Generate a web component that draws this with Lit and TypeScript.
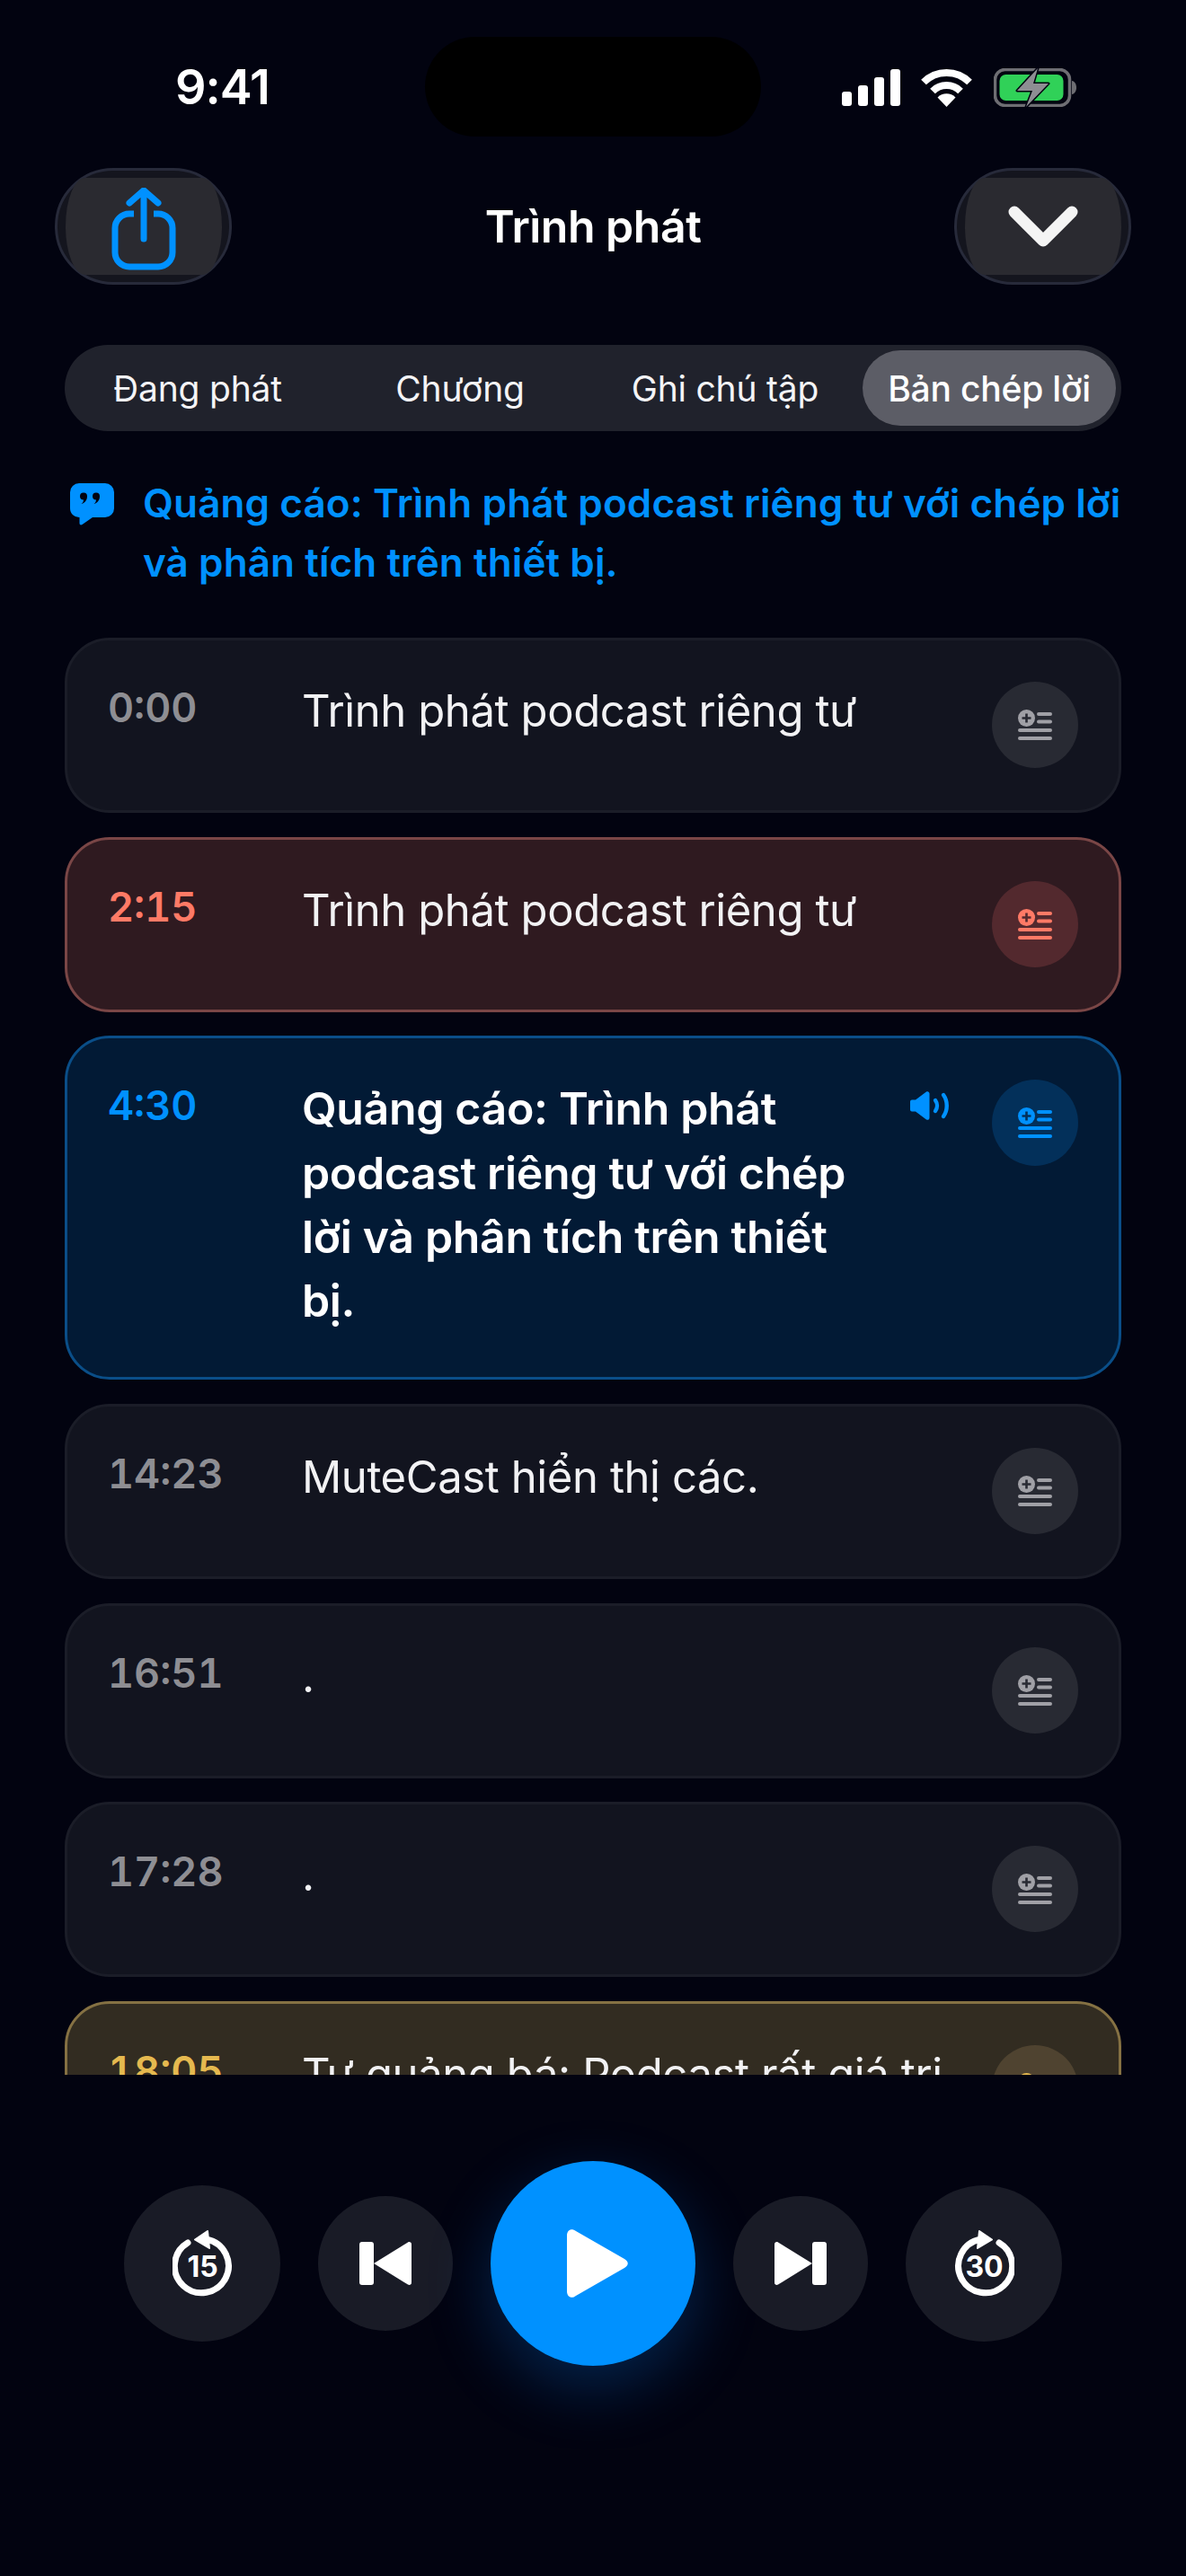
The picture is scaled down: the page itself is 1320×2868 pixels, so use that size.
import { LitElement, html, css, svg } from "lit";
import { customElement } from "lit/decorators.js";

type Row = { time: string; text: string; kind: "plain" | "red" | "blue" | "gold" };

const ROWS: Row[] = [
  { time: "0:00", text: "Trình phát podcast riêng tư", kind: "plain" },
  { time: "2:15", text: "Trình phát podcast riêng tư", kind: "red" },
  { time: "4:30", text: "Quảng cáo: Trình phát podcast riêng tư với chép lời và phân tích trên thiết bị.", kind: "blue" },
  { time: "14:23", text: "MuteCast hiển thị các.", kind: "plain" },
  { time: "16:51", text: ".", kind: "plain" },
  { time: "17:28", text: ".", kind: "plain" },
  { time: "18:05", text: "Tự quảng bá: Podcast rất giá trị", kind: "gold" },
];

const TABS = ["Đang phát", "Chương", "Ghi chú tập", "Bản chép lời"];

const addIcon = svg`<svg class="add" width="38" height="34" viewBox="0 0 38 34">
  <circle cx="9.5" cy="9.5" r="9.5" fill="currentColor"/>
  <path class="plus" d="M9.5 4.5v10M4.5 9.5h10" fill="none" stroke-width="2.6"/>
  <path d="M23 5h13M23 13.5h13M2 23h34M2 32h34" stroke="currentColor" stroke-width="4" stroke-linecap="round" fill="none"/>
</svg>`;

@customElement("app-root")
export class AppRoot extends LitElement {
  static styles = css`
    :host {
      display: block;
      width: 1320px;
      height: 2868px;
      overflow: hidden;
      background: #020310;
      color: #fff;
      font-family: Inter, "Noto Sans", "Liberation Sans", sans-serif;
    }
    button {
      border: 0;
      padding: 0;
      margin: 0;
      font: inherit;
      color: inherit;
      background: none;
    }
    .status {
      position: relative;
      box-sizing: border-box;
      height: 187px;
      padding: 7px 122px 0 195px;
      display: flex;
      align-items: center;
      justify-content: space-between;
    }
    .clock {
      font-size: 54px;
      font-weight: 600;
      letter-spacing: -1px;
      line-height: 60px;
    }
    .island {
      position: absolute;
      left: 473px;
      top: 41px;
      width: 374px;
      height: 111px;
      border-radius: 56px;
      background: #000;
    }
    .sys {
      display: flex;
      align-items: center;
      gap: 23px;
    }
    .sys svg {
      display: block;
    }
    .batt {
      margin-left: 1px;
    }
    .bar {
      height: 130px;
      padding: 0 61px;
      display: flex;
      align-items: center;
      justify-content: space-between;
    }
    .title {
      font-size: 50px;
      font-weight: 600;
      letter-spacing: -0.5px;
    }
    .round {
      box-sizing: border-box;
      width: 197px;
      height: 130px;
      border-radius: 65px;
      border: 3px solid #272a3a;
      background: #14151e;
      display: flex;
      align-items: center;
      justify-content: center;
    }
    .round span {
      width: 174px;
      height: 108px;
      border-radius: 22px / 54px;
      background: #2a2a30;
      display: flex;
      align-items: center;
      justify-content: center;
    }
    .share {
      margin-top: 6px;
    }
    .tabs {
      margin: 67px 72px 0;
      box-sizing: border-box;
      height: 96px;
      padding: 6px 6px 6px 2px;
      border-radius: 48px;
      background: #20222c;
      display: grid;
      grid-template-columns: 292px 292px 298px 1fr;
    }
    .tab {
      border-radius: 42px;
      font-size: 39px;
      font-weight: 400;
      letter-spacing: -0.2px;
      color: #f4f4f6;
    }
    .tab.on {
      margin-left: 4px;
      background: #5c5d66;
      font-weight: 500;
      color: #fff;
    }
    .quote {
      margin: 47px 72px 0 78px;
      display: flex;
      align-items: flex-start;
      gap: 32px;
      color: #0091ff;
      font-size: 44px;
      font-weight: 600;
      line-height: 66px;
      letter-spacing: 0.1px;
    }
    .quote svg {
      flex: none;
      margin-top: 11px;
    }
    .list {
      margin: 51px 72px 0;
      height: 1600px;
      overflow: hidden;
      display: flex;
      flex-direction: column;
      gap: 26.7px;
    }
    .card {
      flex: none;
      box-sizing: border-box;
      padding: 46px 45px 47px;
      border: 3px solid #1b1d28;
      border-radius: 50px;
      background: #12141f;
      display: flex;
      align-items: flex-start;
      --plus: #282a33;
    }
    .card .time {
      flex: none;
      width: 216px;
      font-size: 45px;
      font-weight: 600;
      line-height: 58px;
      color: #8e8e93;
      font-variant-numeric: tabular-nums;
    }
    .card .text {
      flex: 1;
      min-width: 0;
      margin-top: -3px;
      font-size: 49px;
      line-height: 71.25px;
      font-weight: 400;
      color: #f2f2f4;
      letter-spacing: -0.4px;
    }
    .card .speaker {
      flex: none;
      margin: 13px 48px 0 24px;
      color: #0091ff;
    }
    .card .act {
      flex: none;
      margin-left: 24px;
      width: 96px;
      height: 96px;
      border-radius: 50%;
      background: #282a33;
      color: #a0a0a6;
      display: flex;
      align-items: center;
      justify-content: center;
    }
    .speaker + .act {
      margin-left: 0;
    }
    .plus {
      stroke: var(--plus);
    }
    .red {
      background: #2f1a20;
      border-color: #7a4646;
      --plus: #53292e;
    }
    .red .time {
      color: #ff7a66;
    }
    .red .act {
      background: #53292e;
      color: #ff7a66;
    }
    .card.blue {
      padding-bottom: 49px;
      background: #021a35;
      border-color: #0a4e88;
      --plus: #03305a;
    }
    .blue .time {
      color: #0091ff;
    }
    .card.blue .text {
      font-size: 50px;
      letter-spacing: -0.35px;
      font-weight: 600;
      color: #fff;
    }
    .blue .act {
      background: #03305a;
      color: #0091ff;
    }
    .gold {
      background: #322c21;
      border-color: #857143;
      --plus: #4f4330;
    }
    .gold .time {
      color: #e5b94f;
    }
    .gold .act {
      background: #4f4330;
      color: #e5b94f;
    }
    .controls {
      margin-top: 96px;
      height: 228px;
      display: flex;
      align-items: center;
      justify-content: center;
      gap: 42px;
    }
    .ctl {
      flex: none;
      border-radius: 50%;
      background: #191b26;
      display: flex;
      align-items: center;
      justify-content: center;
    }
    .ctl.lg {
      width: 174px;
      height: 174px;
    }
    .ctl.md {
      width: 150px;
      height: 150px;
    }
    .ctl.play {
      width: 228px;
      height: 228px;
      background: #0091ff;
      box-shadow: 0 24px 70px rgba(10, 132, 255, 0.26);
    }
    .ctl .nudge {
      margin-left: 10px;
    }
    .ctl text {
      font-family: Inter, "Liberation Sans", sans-serif;
      font-weight: 700;
      font-size: 32px;
      fill: #fff;
    }
  `;

  private renderRow(r: Row) {
    const blue = r.kind === "blue";
    return html`<div class="card ${r.kind}">
      <div class="time">${r.time}</div>
      <div class="text">${r.text}</div>
      ${blue
        ? html`<svg class="speaker" width="44" height="32" viewBox="0 0 44 32">
            <path d="M1 11.5a2 2 0 0 1 2-2h4L19 .6c1.5-1 3.5 0 3.5 2v26.8c0 2-2 3-3.5 2L7 22.5H3a2 2 0 0 1-2-2z" fill="currentColor"/>
            <path d="M29 10c2.6 3.6 2.6 8.4 0 12M38 4c5 7 5 17 0 24" fill="none" stroke="currentColor" stroke-width="4.4" stroke-linecap="round"/>
          </svg>`
        : null}
      <button class="act">${addIcon}</button>
    </div>`;
  }

  render() {
    return html`
      <div class="status">
        <div class="clock">9:41</div>
        <div class="island"></div>
        <div class="sys">
          <svg width="65" height="41" viewBox="0 0 65 41" fill="#fff">
            <rect x="0" y="25" width="11" height="16" rx="3"/>
            <rect x="18" y="18" width="11" height="23" rx="3"/>
            <rect x="36" y="9" width="11" height="32" rx="3"/>
            <rect x="54" y="0" width="11" height="41" rx="3"/>
          </svg>
          <svg width="57" height="43" viewBox="0 0 57 43" fill="none" stroke="#fff" stroke-width="8">
            <path d="M3 15.5a36 36 0 0 1 51 0"/>
            <path d="M13 25.5a22 22 0 0 1 31 0"/>
            <path d="M18.5 32.5a14 14 0 0 1 20 0L28.5 43z" fill="#fff" stroke="none"/>
          </svg>
          <svg class="batt" width="92" height="43" viewBox="0 0 92 43">
            <rect x="1.5" y="1.5" width="83" height="40" rx="11" fill="none" stroke="#6e6e73" stroke-width="3.5"/>
            <rect x="6.5" y="7" width="71" height="29" rx="7" fill="#30d158"/>
            <path d="M87 14c3 .5 5 3.500 5 7.500s-2 7-5 7.500z" fill="#6e6e73"/>
            <path d="M49 0 26 25h17l-7 18 25-26H44z" fill="#8e8e93" stroke="#020310" stroke-width="3" stroke-linejoin="round" paint-order="stroke"/>
          </svg>
        </div>
      </div>

      <div class="bar">
        <button class="round"><span>
          <svg class="share" width="72" height="92" viewBox="0 0 72 92" fill="none" stroke="#0091ff" stroke-width="7" stroke-linecap="round" stroke-linejoin="round">
            <path d="M36 57V3M20 17 36 3l16 14"/>
            <path d="M25 29H20A16 16 0 0 0 4 45v27a16 16 0 0 0 16 16h32a16 16 0 0 0 16-16V45a16 16 0 0 0-16-16h-5" stroke-linecap="butt"/>
          </svg>
        </span></button>
        <div class="title">Trình phát</div>
        <button class="round"><span>
          <svg width="78" height="46" viewBox="0 0 78 46" fill="none" stroke="#f4f4f4" stroke-width="13" stroke-linecap="round" stroke-linejoin="round">
            <path d="M7 7l32 32L71 7"/>
          </svg>
        </span></button>
      </div>

      <div class="tabs">
        ${TABS.map((t, i) => html`<button class="tab ${i === 3 ? "on" : ""}">${t}</button>`)}
      </div>

      <div class="quote">
        <svg width="49" height="47" viewBox="0 0 49 47">
          <path d="M10 0h29a10 10 0 0 1 10 10v18a10 10 0 0 1-10 10H25L13.500 46c-1.500 1-3 .2-3-1.500V38A10 10 0 0 1 0 28V10A10 10 0 0 1 10 0z" fill="#0091ff"/>
          <path d="M19 14.500a4 4 0 1 0-4 4c-.2 2-1 3.500-2.500 4.500 3.500-.5 6.500-4 6.500-8.500zM33 14.500a4 4 0 1 0-4 4c-.2 2-1 3.500-2.500 4.500 3.500-.5 6.500-4 6.500-8.500z" fill="#020310"/>
        </svg>
        <div>Quảng cáo: Trình phát podcast riêng tư với chép lời và phân tích trên thiết bị.</div>
      </div>

      <div class="list">${ROWS.map((r) => this.renderRow(r))}</div>

      <div class="controls">
        <button class="ctl lg">
          <svg width="67" height="74" viewBox="0 0 67 74" fill="none">
            <path d="M17 14A30 30 0 1 0 38 10.300" stroke="#fff" stroke-width="7" stroke-linecap="round"/>
            <path d="M39 1 25 10.500 41 20z" fill="#fff" stroke="#fff" stroke-width="2" stroke-linejoin="round"/>
            <text x="33.500" y="51.500" text-anchor="middle">15</text>
          </svg>
        </button>
        <button class="ctl md">
          <svg width="58" height="48" viewBox="0 0 58 48" fill="#fff">
            <rect x="0" y="0" width="16" height="48" rx="3"/>
            <path d="M54 .4c2-.8 4 0 4 2.600v42c0 2.600-2 3.400-4 2.600L16 24z"/>
          </svg>
        </button>
        <button class="ctl play">
          <svg class="nudge" width="68" height="76" viewBox="0 0 68 76" fill="#fff">
            <path d="M0 7C0 1 5-2 10 2l54 31c5 3 5 7 0 10L10 74c-5 4-10 1-10-5z"/>
          </svg>
        </button>
        <button class="ctl md">
          <svg width="58" height="48" viewBox="0 0 58 48" fill="#fff">
            <rect x="42" y="0" width="16" height="48" rx="3"/>
            <path d="M4 .4C2-.4 0 .4 0 3v42c0 2.600 2 3.400 4 2.600L42 24z"/>
          </svg>
        </button>
        <button class="ctl lg">
          <svg width="67" height="74" viewBox="0 0 67 74" fill="none">
            <path d="M50 14A30 30 0 1 1 29 10.300" stroke="#fff" stroke-width="7" stroke-linecap="round"/>
            <path d="M28 1 42 10.500 26 20z" fill="#fff" stroke="#fff" stroke-width="2" stroke-linejoin="round"/>
            <text x="33.500" y="51.500" text-anchor="middle">30</text>
          </svg>
        </button>
      </div>
    `;
  }
}
